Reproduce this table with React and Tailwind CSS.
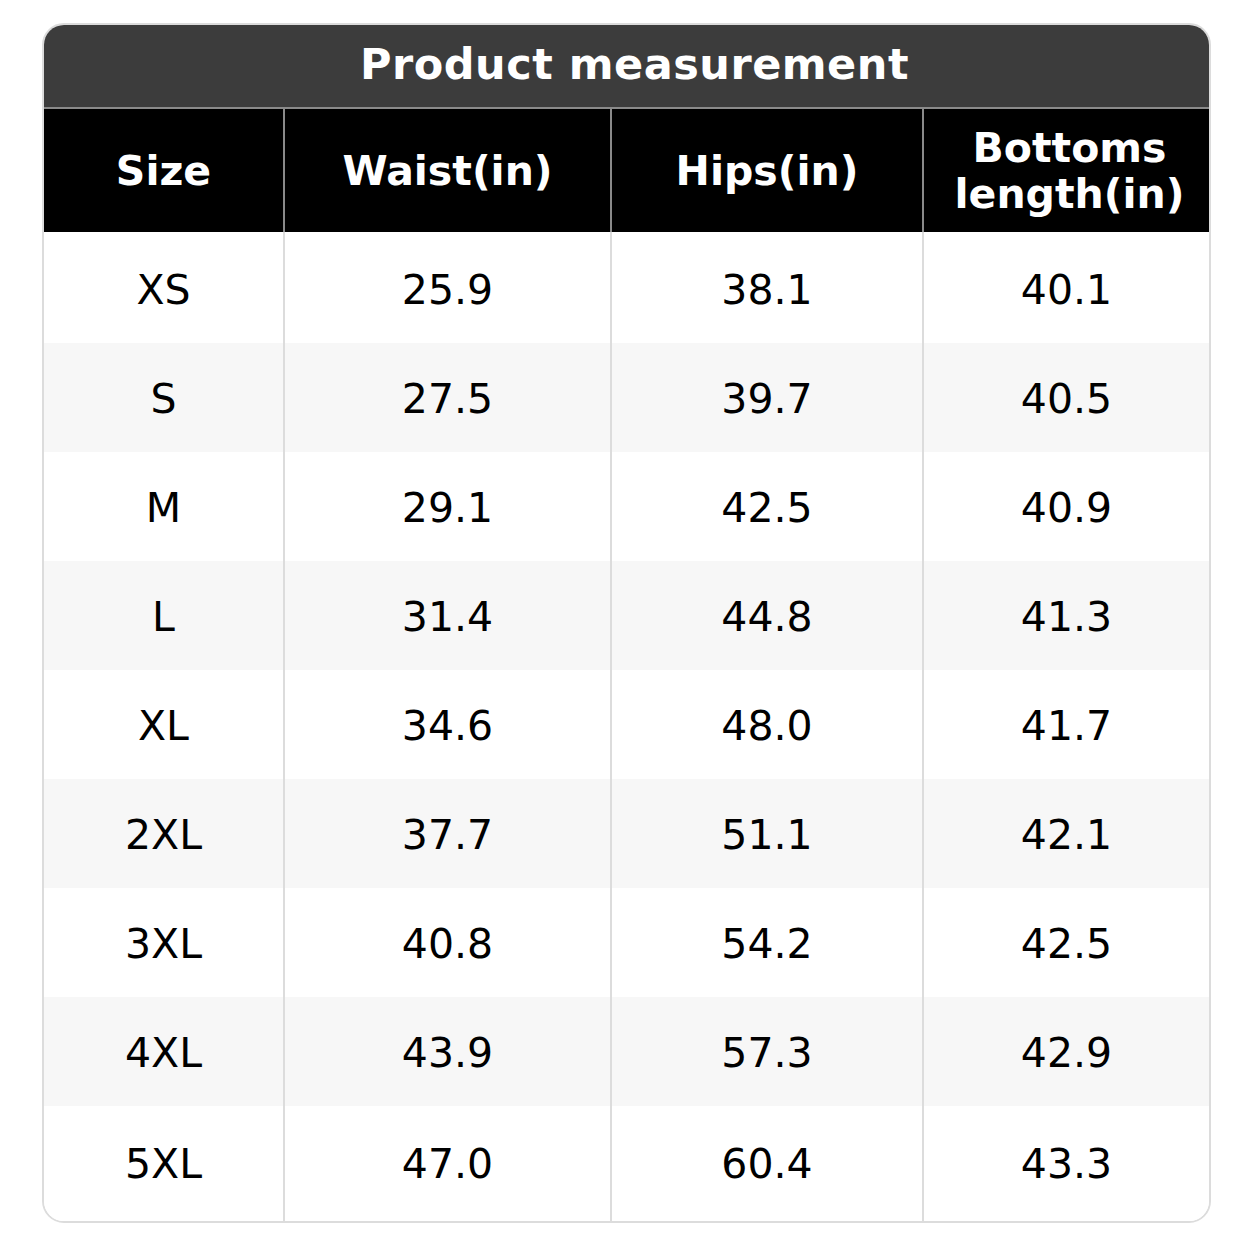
import React from "react";

const rows = [
  ["XS", "25.9", "38.1", "40.1"],
  ["S", "27.5", "39.7", "40.5"],
  ["M", "29.1", "42.5", "40.9"],
  ["L", "31.4", "44.8", "41.3"],
  ["XL", "34.6", "48.0", "41.7"],
  ["2XL", "37.7", "51.1", "42.1"],
  ["3XL", "40.8", "54.2", "42.5"],
  ["4XL", "43.9", "57.3", "42.9"],
  ["5XL", "47.0", "60.4", "43.3"],
];

const cols = "grid grid-cols-[241px_327px_312px_285px]";

function App() {
  return (
    <div
      className="w-[1254px] h-[1254px] bg-white pt-[23px] pl-[42px]"
      style={{ fontFamily: '"DejaVu Sans", "Liberation Sans", sans-serif' }}
    >
      <div className="w-[1169px] rounded-[22px] border-2 border-[#dcdcdc] overflow-hidden">
        <div className="h-[84px] bg-[#3c3c3c] flex items-center justify-center pl-[16px] pb-[4px] text-white font-bold text-[43px] tracking-[0.5px] border-b-2 border-[#8a8a8a]">
          Product measurement
        </div>
        <div className={`${cols} h-[123px] bg-black text-white font-bold text-[41px] leading-[46px] text-center`}>
          <div className="flex items-center justify-center border-r-2 border-[#8a8a8a]">Size</div>
          <div className="flex items-center justify-center border-r-2 border-[#8a8a8a]">Waist(in)</div>
          <div className="flex items-center justify-center border-r-2 border-[#8a8a8a]">Hips(in)</div>
          <div className="flex items-center justify-center pl-[6px]">
            Bottoms
            <br />
            length(in)
          </div>
        </div>
        {rows.map((r, i) => (
          <div
            key={r[0]}
            className={`${cols} ${i === 0 ? "h-[111px]" : i === 8 ? "h-[115px]" : "h-[109px]"} text-[41px] text-black ${i % 2 === 1 ? "bg-[#f7f7f7]" : "bg-white"}`}
          >
            {r.map((c, j) => (
              <div
                key={j}
                className={`flex items-center justify-center ${i === 0 ? "pt-[6px]" : i === 8 ? "pt-[2px]" : "pt-[5px]"} ${j < 3 ? "border-r-2 border-[#dcdcdc]" : ""}`}
              >
                {c}
              </div>
            ))}
          </div>
        ))}
      </div>
    </div>
  );
}

export default App;
